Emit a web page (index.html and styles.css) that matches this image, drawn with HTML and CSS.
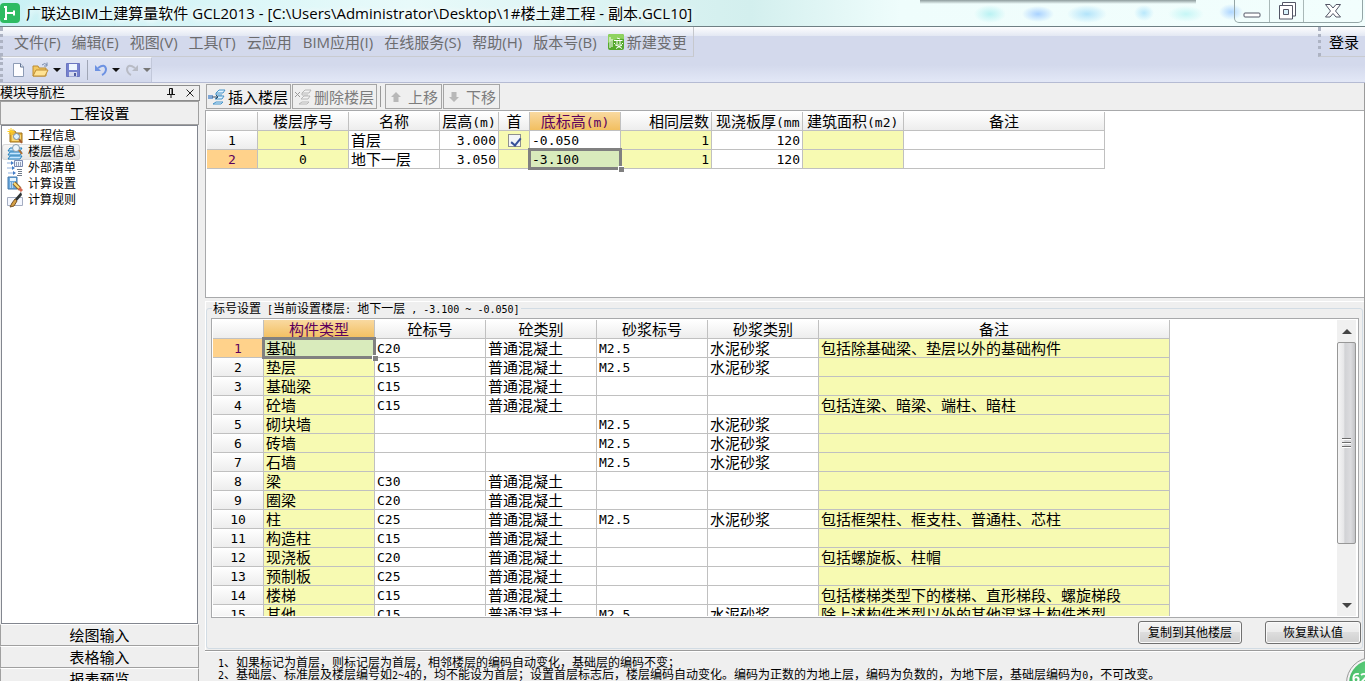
FILE: index.html
```html
<!DOCTYPE html>
<html lang="zh-CN">
<head>
<meta charset="utf-8">
<title>广联达BIM土建算量软件 GCL2013</title>
<link rel="stylesheet" href="styles.css">
</head>
<body>
<div class="app">
  <header class="titlebar">
    <svg class="app-logo" width="20" height="20" viewBox="0 0 20 20"><rect width="20" height="20" rx="4" fill="#2dbb62"/><path d="M6 4v12M6 10h8M14 7.500v5M4 4h3M4 16h3" stroke="#fff" stroke-width="2" fill="none"/></svg>
    <h1 class="app-title">广联达BIM土建算量软件 GCL2013 - [C:\Users\Administrator\Desktop\1#楼土建工程 - 副本.GCL10]</h1>
    <div class="window-buttons">
      <button class="win-btn win-min" aria-label="最小化"><svg width="18" height="18" viewBox="0 0 18 18"><rect x="1" y="11" width="16" height="4" rx="1" fill="#fff" stroke="#535666"/></svg></button>
      <button class="win-btn win-max" aria-label="还原"><svg width="18" height="18" viewBox="0 0 18 18"><path d="M4.500.500h13V14h-13z" fill="#fff" stroke="#535666"/><path d="M1.500 3.500h13V17h-13z" fill="#fff" stroke="#535666"/><path d="M5.500 7.500h5v5h-5z" fill="#d8f2fb" stroke="#535666"/></svg></button>
      <button class="win-btn win-close" aria-label="关闭"><svg width="18" height="18" viewBox="0 0 18 18"><path d="M1.500 2.500h4.500l3 3.500 3-3.500h4.500L11.500 9l5 6H12l-3-3.500L6 15H1.500l5-6z" fill="#fff" stroke="#535666"/></svg></button>
    </div>
  </header>

  <div class="bars">
    <div class="menu-row">
      <nav class="menubar">
        <button class="menu">文件(F)</button>
        <button class="menu">编辑(E)</button>
        <button class="menu">视图(V)</button>
        <button class="menu">工具(T)</button>
        <button class="menu">云应用</button>
        <button class="menu">BIM应用(I)</button>
        <button class="menu">在线服务(S)</button>
        <button class="menu">帮助(H)</button>
        <button class="menu">版本号(B)</button>
        <button class="menu menu-icon"><svg width="16" height="16" viewBox="0 0 16 16"><rect width="16" height="16" rx="2" fill="#55a92e"/><path d="M0 2q0-2 2-2h12q2 0 2 2v3Q8 4 0 9z" fill="#8fd35f"/><path d="M2 3v11M4 5v8M9 4l3 1M6 6.500h8.500M9 7v3M12 7v3M7 9l-1 1M14 9l1 1M7 11h7l-6 3.500M8 11l6 3.500" stroke="#fff" fill="none"/></svg>新建变更</button>
      </nav>
      <div class="login-bar"><button class="login">登录</button></div>
    </div>
    <div class="quickbar">
      <button class="quick" aria-label="新建"><svg width="16" height="16" viewBox="0 0 16 16"><path d="M3.500 1.500h7l3 3.500v9.500h-10z" fill="#fdfdff" stroke="#8d9bb5"/><path d="M10.500 1.500V5h3" fill="#dbe5f3" stroke="#667795"/></svg></button>
      <button class="quick" aria-label="打开"><svg width="18" height="16" viewBox="0 0 18 16"><path d="M1 14V4h5l1 2h7v8z" fill="#f3c860" stroke="#bd8c33"/><path d="M1 14l3-6h12l-3 6z" fill="#ffe394" stroke="#bd8c33"/><path d="M10 3q3-3 5 0M15 .5V4h-3" fill="none" stroke="#788baa"/></svg></button>
      <button class="drop" aria-label="打开选项"></button>
      <button class="quick" aria-label="保存"><svg width="16" height="16" viewBox="0 0 16 16"><path d="M1.500 1.500h13v13h-13z" fill="#7581ce" stroke="#6b76c0"/><path d="M4 2h8v6H4z" fill="#edf5ff"/><path d="M4 10h8v4.500H4z" fill="#d5daee"/><path d="M9 11h2v3H9z" fill="#4f5b9f"/></svg></button>
      <span class="quick-sep"></span>
      <button class="quick" aria-label="撤销"><svg width="16" height="16" viewBox="0 0 16 16"><path d="M5 6q7-5 8 1 0 4-4 6" fill="none" stroke="#6d92e2" stroke-width="2"/><path d="M2 3v6h6z" fill="#6d92e2"/></svg></button>
      <button class="drop" aria-label="撤销选项"></button>
      <button class="quick" aria-label="重做"><svg width="16" height="16" viewBox="0 0 16 16"><path d="M11 6Q4 1 3 7q0 4 4 6" fill="none" stroke="#b8bbc5" stroke-width="2"/><path d="M14 3v6H8z" fill="#b8bbc5"/></svg></button>
      <button class="drop drop-off" aria-label="重做选项"></button>
    </div>
  </div>

  <div class="workspace">
    <aside class="sidebar">
      <div class="side-head">
        <span>模块导航栏</span>
        <button class="side-tool" aria-label="固定"><svg width="10" height="10" viewBox="0 0 10 10"><path d="M3.500 6V.5h3V6M6 1v5M1 6.500h8M5 7v3" fill="none" stroke="#111"/></svg></button>
        <button class="side-tool" aria-label="关闭导航栏"><svg width="8" height="8" viewBox="0 0 8 8"><path d="M.5.500l7 7M7.500.500l-7 7" stroke="#222"/></svg></button>
      </div>
      <button class="side-tab">工程设置</button>
      <ul class="tree">
        <li><button class="node"><svg width="16" height="16" viewBox="0 0 16 16"><path d="M3 14V3h5l1 2h6v9z" fill="#e8b43f" stroke="#9d711d"/><path d="M5 7h9v6H5z" fill="#fad978"/><circle cx="9.500" cy="8.500" r="3" fill="#dff1ff" stroke="#778ba2"/><path d="M12 11l3 4" stroke="#a45a2c" stroke-width="2"/><path d="M4 0v7M.5 3.500h7M1.500 1l5 5M6.500 1l-5 5" stroke="#ffce1f"/></svg>工程信息</button></li>
        <li><button class="node node-on"><svg width="16" height="16" viewBox="0 0 16 16"><path d="M1 15h12l2-3H3zM1 11h12l2-3H3zM1 7h12l2-3H3z" fill="#c7e7ff" stroke="#207fbd"/><circle cx="9" cy="4" r="3.500" fill="#edf5fa" stroke="#829baf"/><path d="M12 6l3 4" stroke="#b17032" stroke-width="2"/></svg>楼层信息</button></li>
        <li><button class="node"><svg width="16" height="16" viewBox="0 0 16 16"><path d="M7.500.500h8v6h-8z" fill="#eaf3ff" stroke="#7888b1"/><path d="M9 3h1M11 3h1M13 3h1M9 5h1M11 5h1M13 5h1" stroke="#465173"/><path d="M0 3h5M0 8h6M1 13h6" stroke="#8fb0dd"/><path d="M4 1l3 2-3 2zM5 6l3 2-3 2zM6 11l3 2-3 2z" fill="#437dc8"/><path d="M10 9.500h5M11 11.500h4M11 13.500h4M10 15.500h5" stroke="#707b89"/></svg>外部清单</button></li>
        <li><button class="node"><svg width="16" height="16" viewBox="0 0 16 16"><path d="M1 1h9v12H1z" fill="#6ba8dc" stroke="#4378ad"/><path d="M3 2h6v3H3z" fill="#e7f5ff"/><path d="M3 7h1M5 7h1M7 7h1M3 9h1M5 9h1M7 9h1M3 11h1M5 11h1" stroke="#fff"/><path d="M7 7l6 6" stroke="#8b652c" stroke-width="4"/><path d="M7 7l6 6" stroke="#ffdd74" stroke-width="2"/><path d="M12 12l3 3" stroke="#d46950" stroke-width="3"/></svg>计算设置</button></li>
        <li><button class="node"><svg width="16" height="16" viewBox="0 0 16 16"><path d="M.5 5.500h15v8H.5z" fill="#f4f7ff" stroke="#a4adc1"/><path d="M14 0l1 3-6 7-2-2z" fill="#2e3435"/><path d="M8 7l2 2-3 5-4 1 2-4z" fill="#d5a044" stroke="#77552a"/></svg>计算规则</button></li>
      </ul>
      <div class="side-stack">
        <button class="side-tab">绘图输入</button>
        <button class="side-tab">表格输入</button>
        <button class="side-tab">报表预览</button>
      </div>
    </aside>

    <main class="content">
      <div class="toolbar">
        <button class="tool"><svg width="18" height="18" viewBox="0 0 18 18"><path d="M8 5l3-3h6l-2 3zM7 11l3-3h6l-2 3zM5 16l3-2h7l-2 2zM8 5v2h6" fill="#e1f3ff" stroke="#4593c8"/><path d="M0 7h5v4H0z" fill="#7da6d6"/><path d="M4 9h6M8 7l2 2-2 2" fill="none" stroke="#35536e"/></svg>插入楼层</button>
        <button class="tool" disabled><svg width="18" height="18" viewBox="0 0 18 18"><path d="M8 5l3-3h6l-2 3zM7 11l3-3h6l-2 3zM5 16l3-2h7l-2 2zM8 5v2h6" fill="#f3f3f3" stroke="#b7b7b7"/><path d="M1 4l5 5M6 4l-5 5" stroke="#999"/></svg>删除楼层</button>
        <span class="tool-sep"></span>
        <button class="tool tool-move" disabled><svg width="10" height="10" viewBox="0 0 10 10"><path d="M5 0l5 5H7.500v5h-5V5H0z" fill="#b8b8b8"/></svg>上移</button>
        <button class="tool tool-move" disabled><svg width="10" height="10" viewBox="0 0 10 10"><path d="M5 10l5-5H7.500V0h-5v5H0z" fill="#b8b8b8"/></svg>下移</button>
      </div>

      <section class="floor-panel">
        <table class="grid">
          <colgroup><col class="w51"><col class="w91"><col class="w91"><col class="w59"><col class="w31"><col class="w91"><col class="w91"><col class="w91"><col class="w101"><col class="w201"></colgroup>
          <thead><tr><th></th><th>楼层序号</th><th>名称</th><th class="tight">层高<i>(m)</i></th><th>首</th><th class="hot">底标高<i>(m)</i></th><th class="right">相同层数</th><th class="left">现浇板厚<i>(mm</i></th><th class="left">建筑面积<i>(m2)</i></th><th>备注</th></tr></thead>
          <tbody>
            <tr><th class="num">1</th><td class="y num mid">1</td><td>首层</td><td class="num right">3.000</td><td class="y mid"><input class="tick" type="checkbox" checked aria-label="首层标记"></td><td class="num">-0.050</td><td class="y num right">1</td><td class="num right">120</td><td class="y"></td><td></td></tr>
            <tr><th class="num hot-row">2</th><td class="y num mid">0</td><td>地下一层</td><td class="num right">3.050</td><td class="y"></td><td class="num picked">-3.100</td><td class="y num right">1</td><td class="num right">120</td><td class="y"></td><td></td></tr>
          </tbody>
        </table>
      </section>

      <section class="lower">
        <fieldset class="group">
          <legend>标号设置<i> [</i>当前设置楼层<i>: </i>地下一层<i> , -3.100 ~ -0.050]</i></legend>
          <div class="grid-box">
            <div class="grid-view">
              <table class="grid">
                <colgroup><col class="w51"><col class="w111"><col class="w111"><col class="w111"><col class="w111"><col class="w111"><col class="w351"></colgroup>
                <thead><tr><th></th><th class="hot">构件类型</th><th>砼标号</th><th>砼类别</th><th>砂浆标号</th><th>砂浆类别</th><th>备注</th></tr></thead>
                <tbody>
                  <tr><th class="num hot-row">1</th><td class="y picked">基础</td><td class="num">C20</td><td>普通混凝土</td><td class="num">M2.5</td><td>水泥砂浆</td><td class="y">包括除基础梁、垫层以外的基础构件</td></tr>
                  <tr><th class="num">2</th><td class="y">垫层</td><td class="num">C15</td><td>普通混凝土</td><td class="num">M2.5</td><td>水泥砂浆</td><td class="y"></td></tr>
                  <tr><th class="num">3</th><td class="y">基础梁</td><td class="num">C15</td><td>普通混凝土</td><td></td><td></td><td class="y"></td></tr>
                  <tr><th class="num">4</th><td class="y">砼墙</td><td class="num">C15</td><td>普通混凝土</td><td></td><td></td><td class="y">包括连梁、暗梁、端柱、暗柱</td></tr>
                  <tr><th class="num">5</th><td class="y">砌块墙</td><td></td><td></td><td class="num">M2.5</td><td>水泥砂浆</td><td class="y"></td></tr>
                  <tr><th class="num">6</th><td class="y">砖墙</td><td></td><td></td><td class="num">M2.5</td><td>水泥砂浆</td><td class="y"></td></tr>
                  <tr><th class="num">7</th><td class="y">石墙</td><td></td><td></td><td class="num">M2.5</td><td>水泥砂浆</td><td class="y"></td></tr>
                  <tr><th class="num">8</th><td class="y">梁</td><td class="num">C30</td><td>普通混凝土</td><td></td><td></td><td class="y"></td></tr>
                  <tr><th class="num">9</th><td class="y">圈梁</td><td class="num">C20</td><td>普通混凝土</td><td></td><td></td><td class="y"></td></tr>
                  <tr><th class="num">10</th><td class="y">柱</td><td class="num">C25</td><td>普通混凝土</td><td class="num">M2.5</td><td>水泥砂浆</td><td class="y">包括框架柱、框支柱、普通柱、芯柱</td></tr>
                  <tr><th class="num">11</th><td class="y">构造柱</td><td class="num">C15</td><td>普通混凝土</td><td></td><td></td><td class="y"></td></tr>
                  <tr><th class="num">12</th><td class="y">现浇板</td><td class="num">C20</td><td>普通混凝土</td><td></td><td></td><td class="y">包括螺旋板、柱帽</td></tr>
                  <tr><th class="num">13</th><td class="y">预制板</td><td class="num">C25</td><td>普通混凝土</td><td></td><td></td><td class="y"></td></tr>
                  <tr><th class="num">14</th><td class="y">楼梯</td><td class="num">C15</td><td>普通混凝土</td><td></td><td></td><td class="y">包括楼梯类型下的楼梯、直形梯段、螺旋梯段</td></tr>
                  <tr><th class="num">15</th><td class="y">其他</td><td class="num">C15</td><td>普通混凝土</td><td class="num">M2.5</td><td>水泥砂浆</td><td class="y">除上述构件类型以外的其他混凝土构件类型</td></tr>
                </tbody>
              </table>
            </div>
            <div class="scroll">
              <button class="scroll-end" aria-label="向上滚动"><svg width="10" height="5" viewBox="0 0 10 5"><path d="M0 5l5-5 5 5z" fill="#444"/></svg></button>
              <div class="scroll-track"><div class="scroll-thumb"><span class="grip"></span></div></div>
              <button class="scroll-end" aria-label="向下滚动"><svg width="10" height="5" viewBox="0 0 10 5"><path d="M0 0l5 5 5-5z" fill="#444"/></svg></button>
            </div>
          </div>
          <div class="actions">
            <button class="push">复制到其他楼层</button>
            <button class="push">恢复默认值</button>
          </div>
        </fieldset>
      </section>

      <footer class="notes">
        <p><i>1</i>、如果标记为首层，则标记层为首层，相邻楼层的编码自动变化，基础层的编码不变；</p>
        <p><i>2</i>、基础层、标准层及楼层编号如<i>2~4</i>的，均不能设为首层；设置首层标志后，楼层编码自动变化。编码为正数的为地上层，编码为负数的，为地下层，基础层编码为<i>0</i>，不可改变。</p>
      </footer>
    </main>
  </div>
  <div class="badge">62</div>
</div>
</body>
</html>
```
FILE: styles.css
```css
* { box-sizing: border-box; }
body {
  margin: 0;
  background: #efefef;
  color: #000;
  font-family: "Open Sans", "Noto Sans CJK SC", sans-serif;
  font-size: 15px;
  line-height: 18px;
}
button {
  margin: 0;
  padding: 0;
  border: 0;
  background: none;
  color: inherit;
  font: inherit;
  white-space: nowrap;
}
svg { display: block; flex: none; }
i { font-family: "DejaVu Sans Mono", monospace; font-style: normal; line-height: 10px; }
.app { display: flex; flex-direction: column; height: 100vh; overflow: hidden; }

/* title bar */
.titlebar {
  display: flex;
  align-items: flex-start;
  flex: none;
  height: 27px;
  border-bottom: 1px solid #6f7f84;
  background:
    linear-gradient(#8d9b9c, #dcebeb00) 920px 0 / 276px 4px no-repeat,
    radial-gradient(ellipse 16px 9px at 990px 14px, #baf2f3, #baf2f300),
    radial-gradient(ellipse 16px 8px at 1038px 14px, #a9d2ff, #a9d2ff00),
    radial-gradient(ellipse 20px 9px at 1087px 14px, #b3e4fa, #b3e4fa00),
    radial-gradient(ellipse 10px 8px at 1144px 13px, #b9e8fb, #b9e8fb00),
    radial-gradient(ellipse 18px 8px at 1186px 14px, #c6f6f6, #c6f6f600),
    radial-gradient(ellipse 12px 8px at 1231px 12px, #afd6ff, #afd6ff00),
    linear-gradient(90deg, #c9f1f4, #e8fafa 30%, #d3efee 55%, #effdfc 66%, #f2fefd);
}
.app-logo { margin-top: 3px; }
.app-title {
  flex: 1;
  margin: 0;
  padding: 3px 0 0 6px;
  font-size: 15px;
  font-weight: 400;
  line-height: 20px;
  white-space: nowrap;
  text-shadow: 0 0 6px #fff, 0 0 6px #fff;
}
.window-buttons {
  display: flex;
  margin-right: 2px;
  border: 1px solid #94a5a6;
  border-top: 0;
  border-radius: 0 0 5px 5px;
}
.win-btn { display: flex; justify-content: center; align-items: center; width: 34px; height: 22px; }
.win-btn + .win-btn { border-left: 1px solid #a9b8b8; }
.win-close { width: 59px; }

/* menu and quick bars */
.bars {
  flex: none;
  height: 56px;
  border-bottom: 1px solid #b5bbd3;
  background: linear-gradient(#fdfdfe, #e3e8f3 9px, #d3d9ec 9px, #d3d9ec 38px, #e2e7f6 54px);
}
.menu-row { display: flex; justify-content: space-between; height: 30px; }
.menubar {
  display: flex;
  align-items: center;
  gap: 11px;
  padding: 0 6px 0 11px;
  border-right: 1px solid #c6c8cd;
  border-bottom: 1px solid #c9cbd0;
  border-left: 3px dotted #adb3c3;
  color: #6c6c6e;
}
.menu-icon { display: flex; align-items: center; gap: 3px; }
.login-bar {
  display: flex;
  align-items: center;
  padding: 0 6px 0 8px;
  border-bottom: 1px solid #c9cbd0;
  border-left: 3px dotted #adb3c3;
}
.quickbar {
  display: flex;
  align-items: center;
  width: 152px;
  height: 25px;
  padding-left: 7px;
  border-top: 1px solid #f5f7fc;
  border-right: 1px solid #c2c8da;
  border-left: 3px dotted #adb3c3;
  background: linear-gradient(#dfe4f4, #d3d9ec);
}
.quick { flex: none; margin-right: 6px; }
.drop {
  flex: none;
  width: 0;
  height: 0;
  margin: 0 4px 0 -3px;
  border: 4px solid transparent;
  border-top-color: #111;
  border-bottom: 0;
}
.drop-off { margin-right: 0; border-top-color: #777; }
.quick-sep { flex: none; width: 1px; height: 20px; margin-right: 5px; background: #a0a6b6; }

/* sidebar */
.workspace { display: flex; flex: 1; min-height: 0; }
.sidebar {
  display: flex;
  flex-direction: column;
  flex: none;
  width: 200px;
  margin-right: 5px;
  padding-top: 2px;
}
.side-head {
  display: flex;
  align-items: center;
  gap: 10px;
  flex: none;
  height: 16px;
  padding-right: 5px;
  border: 1px solid #8d8d8d;
  border-left: 0;
  font-size: 13px;
  line-height: 12px;
}
.side-head span { flex: 1; padding-bottom: 2px; }
.side-tab {
  flex: none;
  height: 22px;
  margin-right: 1px;
  border: 1px solid #a0a0a0;
  border-top-color: #fff;
  line-height: 20px;
}
.side-head + .side-tab { height: 24px; border-top-color: #a0a0a0; }
.tree {
  flex: 1;
  min-height: 0;
  margin: 0 2px 0 1px;
  padding: 2px 0 0;
  border: 1px solid #82868f;
  background: #fff;
  font-size: 12px;
  list-style: none;
}
.node {
  display: flex;
  align-items: center;
  gap: 5px;
  height: 16px;
  padding: 0 4px 0 5px;
  line-height: 16px;
}
.node-on { border-radius: 3px; background: linear-gradient(#f8f8f8, #e4e4e4); box-shadow: inset 0 0 0 1px #dadada; }
.side-stack { display: flex; flex-direction: column; flex: none; height: 57px; overflow: hidden; }

/* content */
.content {
  display: flex;
  flex-direction: column;
  flex: 1;
  min-width: 0;
  border-right: 1px solid #9b9b9b;
}
.toolbar { display: flex; gap: 1px; flex: none; height: 27px; padding: 1px 0 1px 1px; }
.tool {
  display: flex;
  align-items: center;
  gap: 2px;
  padding: 0 2px 0 1px;
  border: 1px solid #a5a5a5;
}
.tool:disabled { color: #7c7c7c; }
.tool-sep { width: 2px; margin: 2px; border-left: 1px solid #999; }
.tool-move { gap: 7px; padding: 0 3px 0 5px; }
.floor-panel {
  flex: none;
  height: 188px;
  padding: 1px;
  overflow: hidden;
  border: 1px solid #a8a9ab;
  border-right: 0;
  background: #fff;
}
.grid {
  width: 0;
  table-layout: fixed;
  border-collapse: separate;
  border-spacing: 0;
}
.w31 { width: 31px; }
.w51 { width: 51px; }
.w59 { width: 59px; }
.w91 { width: 91px; }
.w101 { width: 101px; }
.w111 { width: 111px; }
.w201 { width: 201px; }
.w351 { width: 351px; }
.grid th, .grid td {
  height: 19px;
  padding: 0 2px;
  border-right: 1px solid #c0c0c0;
  border-bottom: 1px solid #c0c0c0;
  font-weight: 400;
  line-height: 18px;
  text-align: left;
  white-space: nowrap;
}
.grid th { overflow: hidden; background: linear-gradient(#fff, #ededed); text-align: center; }
.grid i { font-size: 13px; }
.grid .num { padding-top: 2px; font-family: "DejaVu Sans Mono", monospace; font-size: 13px; line-height: 16px; }
.grid .y { background: #f7fab2; }
.grid .mid { text-align: center; }
.grid .right { text-align: right; }
.grid .left { padding-left: 4px; text-align: left; }
.grid .hot { background: linear-gradient(#f9d9a0, #f2bf60); color: #5c005c; }
.grid .hot-row { background: #ffd28b; color: #5c005c; }
.grid .tight { padding: 0; }
.grid .picked { position: relative; background: #d9ebbc; }
.picked::before {
  content: "";
  position: absolute;
  inset: -2px;
  border: 3px solid #808080;
}
.picked::after {
  content: "";
  position: absolute;
  right: -4px;
  bottom: -4px;
  width: 5px;
  height: 5px;
  border: 1px solid #fff;
  border-right: 0;
  border-bottom: 0;
  background: #808080;
}
.tick {
  display: block;
  position: relative;
  width: 13px;
  height: 13px;
  margin: 0 auto;
  appearance: none;
  border: 1px solid #8e8f8f;
  background: #f3f5f8;
}
.tick:checked::after {
  content: "";
  position: absolute;
  left: 4px;
  top: 1px;
  width: 4px;
  height: 8px;
  border: solid #354f98;
  border-width: 0 2px 2px 0;
  transform: rotate(40deg);
}

.lower {
  display: flex;
  flex: 1;
  min-height: 0;
  margin-top: 3px;
  border-top: 1px solid #fff;
  border-left: 1px solid #fff;
}
.group {
  display: flex;
  flex-direction: column;
  flex: 1;
  min-width: 0;
  margin: 0 1px 1px 0;
  padding: 3px 3px 4px 4px;
  border: 1px solid #d2dce4;
  border-radius: 3px;
}
.group legend {
  margin-left: 1px;
  padding: 0 1px;
  font-size: 12px;
  line-height: 13px;
  white-space: pre;
}
.group legend i, .notes i { font-size: 10px; }
.grid-box {
  display: flex;
  flex: 1;
  min-height: 0;
  padding: 1px 2px 1px 1px;
  border: 1px solid #a8a9ab;
  background: #fff;
}
.grid-view { flex: 1; min-width: 0; overflow: hidden; }
.scroll { display: flex; flex-direction: column; width: 19px; background: #f0f0f0; }
.scroll-end { display: flex; align-items: center; justify-content: center; height: 22px; }
.scroll-track { flex: 1; }
.scroll-thumb {
  display: flex;
  align-items: center;
  justify-content: center;
  height: 80%;
  border: 1px solid #979797;
  border-radius: 2px;
  background: linear-gradient(90deg, #f5f5f5, #e6e6e8 35%, #d1d2d5 40%, #dcdcdf 75%, #c3c4c7);
}
.grip {
  width: 9px;
  height: 10px;
  background: repeating-linear-gradient(#6b6b6b 0 1px, #fff 1px 2px, transparent 2px 4px);
}
.actions { display: flex; flex: none; justify-content: flex-end; gap: 23px; padding-top: 3px; margin-right: -2px; }
.push {
  height: 23px;
  padding: 0 9px;
  border: 1px solid #707070;
  border-radius: 3px;
  background: linear-gradient(#f3f3f3, #ebebeb 50%, #dddddd 50%, #cfcfcf);
  box-shadow: inset 0 0 0 1px #fafafa;
  font-size: 12px;
}
.push + .push { padding: 0 17px; }
.notes {
  flex: none;
  height: 31px;
  padding: 6px 0 0 13px;
  overflow: hidden;
  border-top: 1px solid #9b9b9b;
  box-shadow: inset 0 1px #fff;
  font-size: 12px;
  line-height: 12px;
}
.notes p { margin: 0; white-space: nowrap; }

.badge {
  position: fixed;
  right: -32px;
  bottom: -27px;
  width: 50px;
  height: 50px;
  padding: 9px 0 0 3px;
  border: 2px solid #f4f4f4;
  border-radius: 50%;
  outline: 1px solid #999;
  background: radial-gradient(circle at 50% 30%, #67d584, #2fa852);
  color: #fff;
  font-size: 14px;
  font-weight: 700;
}
```
